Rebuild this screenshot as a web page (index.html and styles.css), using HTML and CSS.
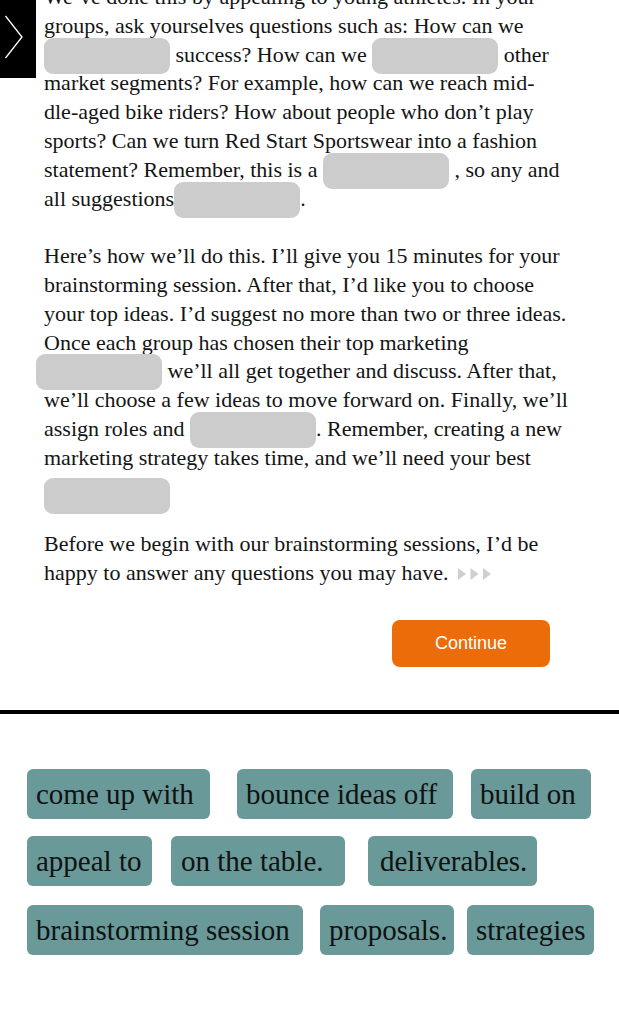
FILE: index.html
```html
<!DOCTYPE html>
<html lang="en">
<head>
<meta charset="utf-8">
<title>Brainstorming</title>
<link rel="stylesheet" href="styles.css">
</head>
<body>
<div class="page">
  <a class="side-tab" href="#" aria-label="Next">
    <svg width="36" height="78" viewBox="0 0 36 78"><polyline points="5.5,16 22,37 5.5,58" fill="none" stroke="#fff" stroke-width="1.3"/></svg>
  </a>
  <article class="reading">
    <p>We’ve done this by appealing to young athletes. In your<br>
groups, ask yourselves questions such as: How can we<br>
<span class="blank"></span> success? How can we <span class="blank"></span> other<br>
market segments? For example, how can we reach mid-<br>
dle-aged bike riders? How about people who don’t play<br>
sports? Can we turn Red Start Sportswear into a fashion<br>
statement? Remember, this is a <span class="blank"></span> , so any and<br>
all suggestions<span class="blank"></span>.</p>
    <p>Here’s how we’ll do this. I’ll give you 15 minutes for your<br>
brainstorming session. After that, I’d like you to choose<br>
your top ideas. I’d suggest no more than two or three ideas.<br>
Once each group has chosen their top marketing<br>
<span class="blank shift"></span> we’ll all get together and discuss. After that,<br>
we’ll choose a few ideas to move forward on. Finally, we’ll<br>
assign roles and <span class="blank"></span>. Remember, creating a new<br>
marketing strategy takes time, and we’ll need your best<br>
<span class="blank tail"></span></p>
    <p>Before we begin with our brainstorming sessions, I’d be<br>
happy to answer any questions you may have. <svg class="audio" width="34" height="14" viewBox="0 0 34 14"><polygon points="0,1 8,7 0,13" fill="#cfcfcf"/><polygon points="12.5,1 20.5,7 12.5,13" fill="#cfcfcf"/><polygon points="25,1 33,7 25,13" fill="#cfcfcf"/></svg></p>
  </article>
  <div class="actions">
    <button class="continue" type="button">Continue</button>
  </div>
  <div class="divider"></div>
  <div class="bank">
    <div class="row">
      <span class="chip c1">come up with</span>
      <span class="chip c2">bounce ideas off</span>
      <span class="chip c3">build on</span>
    </div>
    <div class="row">
      <span class="chip c4">appeal to</span>
      <span class="chip c5">on the table.</span>
      <span class="chip c6">deliverables.</span>
    </div>
    <div class="row">
      <span class="chip c7">brainstorming session</span>
      <span class="chip c8">proposals.</span>
      <span class="chip c9">strategies</span>
    </div>
  </div>
</div>
</body>
</html>
```

FILE: styles.css
```css
html, body {
  margin: 0;
  padding: 0;
  background: #ffffff;
}

.page {
  position: relative;
  width: 619px;
  height: 1023px;
  overflow: hidden;
  font-family: "Liberation Serif", "Times New Roman", serif;
  color: #141414;
}

.side-tab {
  position: absolute;
  left: 0;
  top: 0;
  width: 36px;
  height: 78px;
  background: #000;
  display: block;
}

.side-tab svg {
  display: block;
}

.reading {
  margin-top: -17px;
  padding-left: 44px;
  font-size: 22px;
  line-height: 28.8px;
  white-space: nowrap;
}

.reading p {
  margin: 0 0 28.8px 0;
}

.reading p:last-child {
  margin-bottom: 0;
}

.blank {
  display: inline-block;
  width: 126px;
  height: 36px;
  margin: -3px 0 -5px 0;
  border-radius: 9px;
  background: #cccccc;
  vertical-align: top;
}

.blank.shift {
  margin-left: -8px;
}

.blank.tail {
  margin-top: 5px;
  margin-bottom: -13px;
}

.audio {
  vertical-align: -1px;
  margin-left: 4px;
}

.actions {
  display: flex;
  justify-content: flex-end;
  padding-right: 69px;
  margin-top: 32.5px;
}

.continue {
  width: 158px;
  height: 47px;
  border: 0;
  border-radius: 8px;
  background: #ec6c0a;
  color: #ffffff;
  font-family: "Liberation Sans", Arial, sans-serif;
  font-size: 18px;
  padding: 0;
}

.divider {
  height: 4px;
  background: #000;
  margin-top: 43px;
}

.bank {
  padding: 55px 0 0 27px;
  display: flex;
  flex-direction: column;
  gap: 17px;
}

.row {
  display: flex;
}

.chip {
  display: flex;
  align-items: center;
  justify-content: flex-start;
  height: 50px;
  padding-left: 9px;
  border-radius: 6px;
  background: #699999;
  color: #111;
  font-size: 29px;
  white-space: nowrap;
  box-sizing: border-box;
}

.c1 { width: 183px; }
.c2 { width: 216px; margin-left: 27px; }
.c3 { width: 120px; margin-left: 18px; }
.c4 { width: 125px; }
.c5 { width: 174px; margin-left: 19px; padding-left: 10px; }
.c6 { width: 169px; margin-left: 23px; padding-left: 12px; }
.c7 { width: 276px; }
.c8 { width: 134px; margin-left: 17px; }
.c9 { width: 127px; margin-left: 13px; }

.row:nth-child(3) {
  margin-top: 2px;
}
```
